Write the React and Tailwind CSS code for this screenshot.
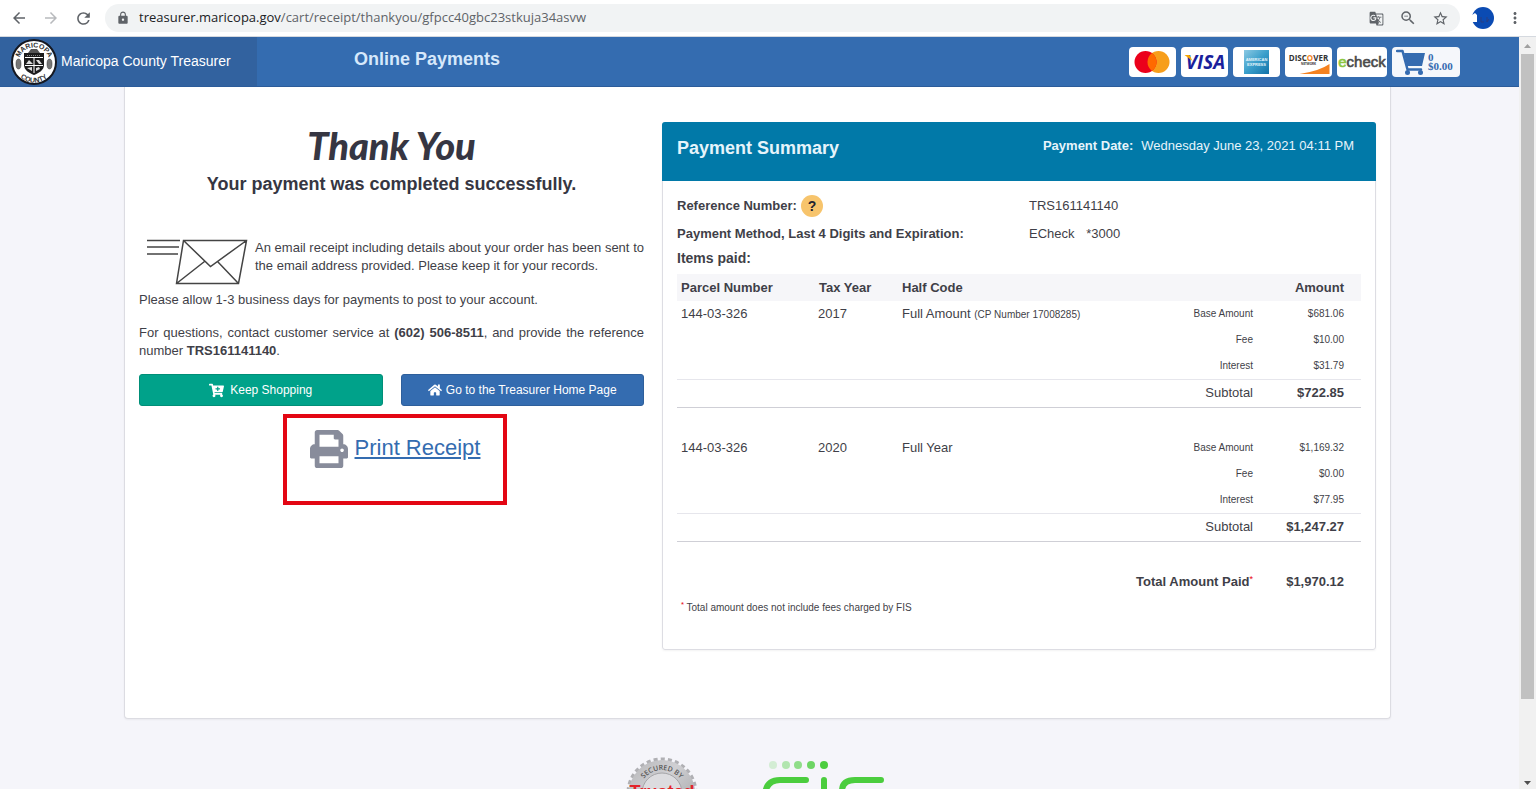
import { FaCartPlus, FaHome, FaPrint } from "react-icons/fa";
import {
  MdArrowBack,
  MdArrowForward,
  MdGTranslate,
  MdLock,
  MdMoreVert,
  MdRefresh,
  MdStarBorder,
  MdZoomOut,
} from "react-icons/md";

const PARCELS = [
  {
    parcel: "144-03-326",
    year: "2017",
    code: "Full Amount",
    note: "(CP Number 17008285)",
    lines: [
      ["Base Amount", "$681.06"],
      ["Fee", "$10.00"],
      ["Interest", "$31.79"],
    ],
    subtotal: "$722.85",
  },
  {
    parcel: "144-03-326",
    year: "2020",
    code: "Full Year",
    lines: [
      ["Base Amount", "$1,169.32"],
      ["Fee", "$0.00"],
      ["Interest", "$77.95"],
    ],
    subtotal: "$1,247.27",
  },
];

function BrowserBar() {
  return (
    <div className="flex h-9 shrink-0 items-center bg-white pr-3 pl-[10px] text-[#5f6368]">
      <button aria-label="Back" className="mr-[14px]">
        <MdArrowBack size={18} />
      </button>
      <button aria-label="Forward" className="mr-[14px] text-[#b8babd]">
        <MdArrowForward size={18} />
      </button>
      <button aria-label="Reload" className="mr-[12px]">
        <MdRefresh size={19} />
      </button>
      <div className="flex h-7 flex-1 items-center rounded-full bg-[#f1f3f4] px-[11px]">
        <MdLock size={14} className="mr-[9px]" />
        <div className="flex-1 font-['Open_Sans','Noto_Sans',sans-serif] text-[13px]">
          <span className="text-[#202124]">treasurer.maricopa.gov</span>
          /cart/receipt/thankyou/gfpcc40gbc23stkuja34asvw
        </div>
        <div className="flex items-center gap-[15px]">
          <button aria-label="Translate"><MdGTranslate size={15} /></button>
          <button aria-label="Zoom"><MdZoomOut size={18} /></button>
          <button aria-label="Bookmark"><MdStarBorder size={17} /></button>
        </div>
      </div>
      <svg viewBox="0 0 22 22" className="mx-3 size-[22px]" role="img" aria-label="Profile">
        <circle cx="11" cy="11" r="11" fill="#0b4bb3" />
        <path d="M0 8l3-2 2 2v7H0z" fill="#fff" />
        <path d="M9 10v5h3M15 10v5l2-3" fill="none" stroke="#2b3f80" />
      </svg>
      <button aria-label="Menu"><MdMoreVert size={18} /></button>
    </div>
  );
}

function CountySeal() {
  return (
    <svg viewBox="0 0 46 46" className="size-[46px] shrink-0" role="img" aria-label="Maricopa County seal">
      <defs>
        <path id="seal-top" d="M7.500 24a15.500 15.500 0 0 1 31 0" />
        <path id="seal-bottom" d="M2.500 23a20.500 20.500 0 0 0 41 0" />
      </defs>
      <circle cx="23" cy="23" r="22" fill="#fff" stroke="#151821" strokeWidth="2" />
      <g fontFamily="Liberation Sans, sans-serif" fontSize="7" fontWeight="700" fill="#333" textAnchor="middle">
        <text><textPath href="#seal-top" startOffset="50%">MARICOPA</textPath></text>
        <text><textPath href="#seal-bottom" startOffset="50%">COUNTY</textPath></text>
      </g>
      <path d="M17 14l3-4h6l3 4z" fill="#555" />
      <path d="M13 14h20v12c0 5-5 8-10 10c-5-2-10-5-10-10z" fill="#1c1c1c" />
      <path d="M14 18.500h18M23 19v15M14 26.500h18" stroke="#fff" />
      <path d="M15 25l3-4 4 4zM25 32l4-2-1-2-3 1zM16 29l5-1v4zM25 21h3l3 4h-3z" fill="#ddd" />
      <path d="M16 16.500h14" stroke="#888" strokeDasharray="1 1" />
      <g fill="#777" stroke="#333" strokeWidth=".5">
        <ellipse cx="7.500" cy="25" rx="2.500" ry="5" />
        <ellipse cx="38.500" cy="25" rx="2.500" ry="5" />
      </g>
    </svg>
  );
}

function PaymentLogos() {
  return (
    <div className="flex gap-[5px]">
      <svg viewBox="0 0 46 30" className="h-[30px] w-[47px] rounded-sm bg-white" role="img" aria-label="Mastercard">
        <circle cx="29" cy="15" r="11" fill="#f79e1b" />
        <circle cx="16" cy="15" r="11" fill="#eb001b" />
        <path d="M22.500 6.100a11 11 0 0 1 0 17.800a11 11 0 0 1 0-17.800z" fill="#ff6a00" />
      </svg>
      <svg viewBox="0 0 46 30" className="h-[30px] w-[47px] rounded-sm bg-white" role="img" aria-label="Visa">
        <text x="24" y="22" textAnchor="middle" fontFamily="Open Sans, sans-serif" fontSize="19" fontWeight="700" fontStyle="italic" fill="#1a1f9c">VISA</text>
        <path d="M3 8h5l3 6z" fill="#f7a600" />
      </svg>
      <svg viewBox="0 0 46 30" className="h-[30px] w-[47px] rounded-sm bg-white" role="img" aria-label="American Express">
        <defs>
          <linearGradient id="amex" x1="0" y1="0" x2="1" y2="1">
            <stop offset="0" stopColor="#8cc9e3" />
            <stop offset=".5" stopColor="#3a9fcb" />
            <stop offset="1" stopColor="#1272a8" />
          </linearGradient>
        </defs>
        <path d="M10.500 3h25v24h-25z" fill="url(#amex)" />
        <g fontFamily="Liberation Sans, sans-serif" fontSize="4" fontWeight="700" fill="#e7f5fb" textAnchor="middle">
          <text x="23" y="14">AMERICAN</text>
          <text x="23" y="19">EXPRESS</text>
        </g>
      </svg>
      <svg viewBox="0 0 46 30" className="h-[30px] w-[47px] rounded-sm bg-white" role="img" aria-label="Discover Network">
        <g fontFamily="Open Sans, sans-serif" fontWeight="700" fill="#333" textAnchor="middle">
          <text x="23" y="14" fontSize="8">DISC<tspan fill="#f58220">O</tspan>VER</text>
          <text x="23" y="18" fontSize="3">NETWORK</text>
        </g>
        <path d="M14 27Q34 24 44 17v10z" fill="#f58220" />
      </svg>
      <svg viewBox="0 0 50 30" className="h-[30px] w-[50px] rounded-sm bg-white" role="img" aria-label="echeck">
        <text x="25" y="20" textAnchor="middle" fontFamily="Liberation Sans, sans-serif" fontSize="15" fill="#4a4a4a" stroke="#4a4a4a" strokeWidth=".6">
          <tspan fill="#8cc63f" stroke="#8cc63f">e</tspan>check
        </text>
      </svg>
      <a href="#cart" className="flex h-[30px] w-[68px] items-center gap-[3px] rounded-sm bg-[#f5f7fb] px-1 text-[#356bb0]">
        <svg viewBox="0 0 29 26" className="h-[26px] w-[29px]" aria-hidden="true">
          <path d="M8 4h21l-3 13H11z" fill="currentColor" />
          <path d="M1 2h5.500l5 18.500H25" fill="none" stroke="currentColor" strokeWidth="2.500" strokeLinecap="round" strokeLinejoin="round" />
          <circle cx="11.500" cy="23.500" r="2.500" fill="currentColor" />
          <circle cx="24.500" cy="23.500" r="2.500" fill="currentColor" />
        </svg>
        <span className="font-['Liberation_Serif',serif] text-[11px] leading-[9px] font-bold">
          0<br />$0.00
        </span>
      </a>
    </div>
  );
}

function SiteHeader() {
  return (
    <header className="flex h-[50px] items-stretch border-b border-[#2c5c9a] bg-[#346cb0]">
      <a href="#home" className="flex w-[257px] items-center gap-1 bg-[#32629f] pl-[11px] text-[14px] text-white">
        <CountySeal />
        Maricopa County Treasurer
      </a>
      <h2 className="ml-[97px] pt-[10px] text-[18px] leading-6 font-bold text-[#d6e8fb]">Online Payments</h2>
      <div className="mr-[59px] ml-auto flex items-center">
        <PaymentLogos />
      </div>
    </header>
  );
}

function EmailIcon() {
  return (
    <svg viewBox="0 0 116 56" className="h-[56px] w-[116px] shrink-0" fill="none" stroke="#444" strokeWidth="1.500">
      <path d="M8 9.500h33M8 16h32M8 23h31" />
      <path d="M44.500 9.500h63l-8 43h-62zM44.500 9.500l27 26 36-26M37.500 52.500l28-22M99.500 52.500l-21-22" />
    </svg>
  );
}

function ThankYou() {
  return (
    <section className="text-[13px] leading-[18px]">
      <div className="text-center text-[#363642]">
        <h1 className="pb-1 font-['Lato',cursive] text-[38px] leading-[46px] font-black italic">Thank You</h1>
        <h3 className="text-[18px] leading-6 font-bold">Your payment was completed successfully.</h3>
      </div>
      <div className="mt-[35px] flex text-justify">
        <EmailIcon />
        <p className="pt-2">
          An email receipt including details about your order has been sent to the email address provided. Please keep
          it for your records.
        </p>
      </div>
      <p className="mt-1">Please allow 1-3 business days for payments to post to your account.</p>
      <p className="mt-[15px] text-justify">
        For questions, contact customer service at <b>(602) 506-8511</b>, and provide the reference number{" "}
        <b>TRS161141140</b>.
      </p>
      <div className="mt-[14px] grid grid-cols-2 gap-[18px] text-[12px] text-white">
        <button className="flex h-8 items-center justify-center gap-[6px] rounded-[3px] border border-[#008f78] bg-[#00a28a]">
          <FaCartPlus size={15} />
          Keep Shopping
        </button>
        <button className="flex h-8 items-center justify-center gap-1 rounded-[3px] border border-[#2e5f9b] bg-[#346cb0]">
          <FaHome size={14} />
          Go to the Treasurer Home Page
        </button>
      </div>
      <div className="mt-2 ml-36 flex h-[91px] w-[224px] items-start justify-center gap-[7px] border-4 border-[#e30613] pt-3">
        <FaPrint size={38} className="text-[#888c9b]" />
        <a href="#print" className="pt-1 text-[22px] leading-7 text-[#346cb0] underline">
          Print Receipt
        </a>
      </div>
    </section>
  );
}

function ParcelRows({ item }) {
  return (
    <tbody>
      {item.lines.map(([label, amount], i) => (
        <tr key={label} className="h-[26px]">
          <td className="pl-1">{i === 0 && item.parcel}</td>
          <td className="pl-1">{i === 0 && item.year}</td>
          <td className="pl-1">
            {i === 0 && item.code} {i === 0 && item.note && <small className="text-[10px]">{item.note}</small>}
          </td>
          <td className="text-right text-[10px]">{label}</td>
          <td className="pr-[17px] text-right text-[10px]">{amount}</td>
        </tr>
      ))}
      <tr className="h-7 border-t border-b border-t-[#e6e6ec] border-b-[#cfcfd6]">
        <td colSpan={4} className="text-right">Subtotal</td>
        <td className="pr-[17px] text-right font-bold">{item.subtotal}</td>
      </tr>
      <tr className="h-7">
        <td colSpan={5} />
      </tr>
    </tbody>
  );
}

function PaymentSummary() {
  return (
    <section className="rounded-[3px] border border-[#dddde3] text-[13px] leading-[18px] shadow-xs">
      <div className="-m-px flex h-[59px] justify-between rounded-t-[3px] bg-[#0179a8] pt-[14px] pr-[22px] pl-[15px] text-[#e6f4fb]">
        <h2 className="text-[18px] leading-6 font-bold">Payment Summary</h2>
        <p className="pt-px">
          <b className="mr-2">Payment Date:</b>Wednesday June 23, 2021 04:11 PM
        </p>
      </div>
      <div className="px-[14px] pt-[12px] pb-[32px]">
        <dl className="grid grid-cols-[352px_1fr] items-center">
          <dt className="flex h-7 items-center gap-1 font-bold">
            Reference Number:
            <button className="size-[22px] rounded-full bg-[#f7c46c] text-[14px] font-bold text-[#222230]">?</button>
          </dt>
          <dd>TRS161141140</dd>
          <dt className="flex h-7 items-center font-bold">Payment Method, Last 4 Digits and Expiration:</dt>
          <dd>
            ECheck <span className="ml-2">*3000</span>
          </dd>
        </dl>
        <h3 className="text-[14px] leading-5 font-bold">Items paid:</h3>
        <table className="mt-[6px] w-full table-fixed border-collapse">
          <colgroup>
            <col className="w-[137px]" />
            <col className="w-[84px]" />
            <col />
            <col className="w-[108px]" />
            <col className="w-[108px]" />
          </colgroup>
          <thead>
            <tr className="h-[27px] bg-[#f6f6f9] text-left">
              <th className="pl-1">Parcel Number</th>
              <th className="pl-[5px]">Tax Year</th>
              <th className="pl-1">Half Code</th>
              <th />
              <th className="pr-[17px] text-right">Amount</th>
            </tr>
          </thead>
          {PARCELS.map((item) => (
            <ParcelRows key={item.year} item={item} />
          ))}
          <tfoot>
            <tr className="h-[26px] font-bold">
              <td colSpan={4} className="text-right">
                Total Amount Paid<sup className="text-[9px] font-normal text-red-600">*</sup>
              </td>
              <td className="pr-[17px] text-right">$1,970.12</td>
            </tr>
          </tfoot>
        </table>
        <p className="mt-1 pl-1 text-[10px]">
          <sup className="text-red-600">*</sup> Total amount does not include fees charged by FIS
        </p>
      </div>
    </section>
  );
}

function Footer() {
  return (
    <footer className="mt-[38px] flex justify-center gap-16 pr-2">
      <svg viewBox="0 0 72 72" className="size-[72px]" role="img" aria-label="Secured by Trusted Commerce">
        <defs>
          <linearGradient id="badge" x1="0" y1="0" x2="1" y2="1">
            <stop offset="0" stopColor="#b5b5b8" />
            <stop offset=".4" stopColor="#d0d0d3" />
            <stop offset="1" stopColor="#9c9c9f" />
          </linearGradient>
          <path id="badge-arc" d="M13 36a23 23 0 0 1 46 0" />
        </defs>
        <circle cx="36" cy="36" r="33" fill="none" stroke="#b0b0b4" strokeWidth="5" strokeDasharray="4 3" />
        <circle cx="36" cy="36" r="33" fill="url(#badge)" />
        <circle cx="36" cy="36" r="20" fill="#dcdcdf" stroke="#a5a5a8" />
        <text fontFamily="Open Sans, sans-serif" fontSize="7" fontWeight="600" fill="#555">
          <textPath href="#badge-arc" startOffset="50%" textAnchor="middle">SECURED BY</textPath>
        </text>
        <text x="36" y="41" textAnchor="middle" fontFamily="Liberation Sans, sans-serif" fontSize="18" fontWeight="700" fill="#e3242b">Trusted</text>
      </svg>
      <svg viewBox="0 0 124 72" className="h-[72px] w-[124px]" role="img" aria-label="FIS">
        <g fill="#4bcd3e">
          <circle cx="11" cy="8" r="4" opacity=".2" />
          <circle cx="24" cy="8" r="4" opacity=".4" />
          <circle cx="36" cy="8" r="4" opacity=".6" />
          <circle cx="49" cy="8" r="4" opacity=".8" />
          <circle cx="62" cy="8" r="4" />
        </g>
        <path d="M44 23H18Q3 23 3 40v30M62 23v47M119 23H93Q80 23 80 34t13 12h14" fill="none" stroke="#4bcd3e" strokeWidth="6" strokeLinecap="round" />
      </svg>
    </footer>
  );
}

function Scrollbar() {
  return (
    <div className="flex w-[17px] shrink-0 flex-col items-center bg-[#f1f1f1]">
      <svg viewBox="0 0 17 17" className="size-[17px]"><path d="M5 11l3.500-4 3.500 4z" fill="#a0a0a0" /></svg>
      <div className="w-[13px] flex-[645] bg-[#c1c1c1]" />
      <div className="flex-[73]" />
      <svg viewBox="0 0 17 17" className="size-[17px]"><path d="M5 9l3.500 4 3.500-4z" fill="#505050" /></svg>
    </div>
  );
}

export default function App() {
  return (
    <div className="flex h-screen flex-col overflow-hidden bg-[#f5f5fa] font-['Liberation_Sans',Arial,sans-serif] text-[#3f3f48]">
      <BrowserBar />
      <div className="flex min-h-0 flex-1 border-t border-[#d5d9df]">
        <div className="flex-1 overflow-hidden">
          <SiteHeader />
          <main className="mr-32 ml-31 rounded-b-[4px] border border-t-0 border-[#dcdce2] bg-white px-[14px] pt-[35px] pb-[68px] shadow-xs">
            <div className="grid grid-cols-[505fr_714fr] items-start gap-[18px]">
              <ThankYou />
              <PaymentSummary />
            </div>
          </main>
          <Footer />
        </div>
        <Scrollbar />
      </div>
    </div>
  );
}
